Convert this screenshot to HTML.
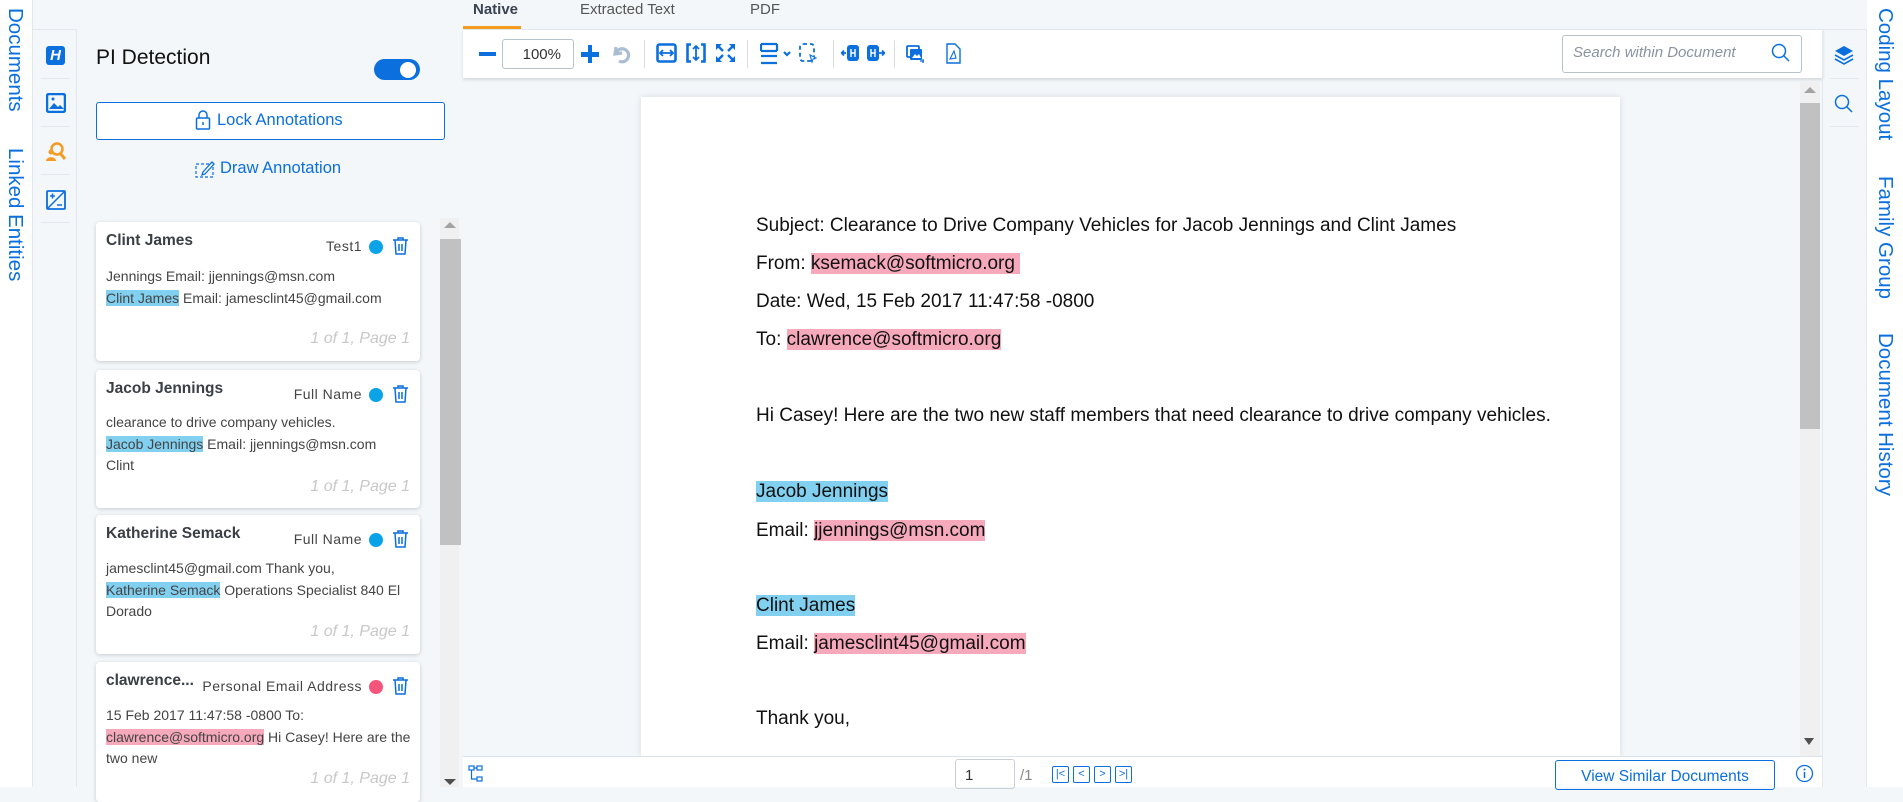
<!DOCTYPE html>
<html><head><meta charset="utf-8">
<style>
*{box-sizing:border-box;margin:0;padding:0}
body{width:1903px;height:787px;overflow:hidden;background:#f3f7fa;font-family:"Liberation Sans",sans-serif;position:relative;color:#333}
.a{position:absolute}
.vt{writing-mode:vertical-rl;color:#0b6fde;font-size:20.5px;position:absolute;white-space:nowrap}
.blue{color:#0b6fde}
.card{position:absolute;left:96px;width:324px;background:#fff;border-radius:4px;box-shadow:0 1px 4px rgba(0,0,0,.18)}
.card .t{position:absolute;left:10px;top:10px;font-weight:bold;font-size:15.5px;color:#3a3f45}
.card .tag{position:absolute;right:58px;top:16px;font-size:14px;color:#444;letter-spacing:.5px}
.card .dot{position:absolute;right:37px;top:18px;width:14px;height:14px;border-radius:50%;background:#0aa3e8}
.card .trash{position:absolute;right:11px;top:14px}
.card .b{position:absolute;left:10px;top:55px;width:308px;font-size:14px;line-height:21.5px;color:#444}
.card .pg{position:absolute;right:10px;font-size:16px;font-style:italic;color:#c8c8c8}
.hb{background:#82d0f0}
.hp{background:#f5a9bb}
.doc{position:absolute;left:756px;font-size:19px;color:#111;white-space:nowrap}
.sep{position:absolute;top:40px;width:1px;height:28px;background:#d8dde3}
</style></head><body>
<div class="a" style="left:0;top:0;width:33px;height:787px;background:#fff;border-right:1px solid #e2e8ee"></div>
<div class="vt" style="left:3px;top:8px">Documents</div>
<div class="vt" style="left:3px;top:148px">Linked Entities</div>
<div class="a" style="left:33px;top:29px;width:44px;height:758px;border-right:1px solid #e2e8ee;border-top:1px solid #e2e8ee"></div>
<div class="a" style="left:46px;top:46px;width:19px;height:19px;background:#0b6fde;border-radius:3px;color:#fff;font-weight:bold;font-style:italic;font-size:15px;text-align:center;line-height:19px">H</div>
<div class="a" style="left:41px;top:78px;width:29px;height:1px;background:#e2e8ee"></div>
<svg class="a" style="left:46px;top:93px" width="20" height="20"><rect x="1" y="1" width="18" height="18" rx="2" fill="none" stroke="#0b6fde" stroke-width="2.5"/><path d="M3 16l5-6 4 4 2-2 4 4z" fill="#0b6fde"/><circle cx="7" cy="6" r="1.5" fill="#0b6fde"/></svg>
<div class="a" style="left:41px;top:126px;width:29px;height:1px;background:#e2e8ee"></div>
<svg class="a" style="left:46px;top:142px" width="20" height="20"><circle cx="11" cy="7" r="5.5" fill="none" stroke="#f59a23" stroke-width="2.5"/><path d="M14 11l5 6" stroke="#f59a23" stroke-width="3"/><circle cx="5" cy="10" r="2.5" fill="#f59a23"/><path d="M0 19c0-5 10-5 10 0z" fill="#f59a23"/></svg>
<div class="a" style="left:41px;top:174px;width:29px;height:1px;background:#e2e8ee"></div>
<svg class="a" style="left:46px;top:190px" width="20" height="20"><rect x="1" y="1" width="18" height="18" rx="1" fill="none" stroke="#0b6fde" stroke-width="1.8"/><path d="M1 19L19 1M4 6h5M6.5 3.5v5M11 15h5" stroke="#0b6fde" stroke-width="1.5"/></svg>
<div class="a" style="left:41px;top:222px;width:29px;height:1px;background:#e2e8ee"></div>
<div class="a" style="left:96px;top:46px;font-size:21px;color:#111">PI Detection</div>
<div class="a" style="left:374px;top:59px;width:46px;height:21px;border-radius:11px;background:#0b6fde"></div>
<div class="a" style="left:400px;top:62px;width:16px;height:16px;border-radius:50%;background:#fff"></div>
<div class="a" style="left:96px;top:102px;width:349px;height:38px;border:1.5px solid #0b6fde;border-radius:3px;background:#fff"></div>
<svg class="a" style="left:195px;top:110px" width="16" height="20"><rect x="1.5" y="8" width="13" height="11" rx="1" fill="none" stroke="#0b6fde" stroke-width="1.5"/><path d="M4 8V5a4 4 0 0 1 8 0v3" fill="none" stroke="#0b6fde" stroke-width="1.5"/><path d="M8 12v3" stroke="#0b6fde" stroke-width="1.5"/></svg>
<div class="a blue" style="left:217px;top:111px;font-size:16.5px">Lock Annotations</div>
<svg class="a" style="left:195px;top:159px" width="20" height="20"><rect x="1" y="5" width="17" height="13" fill="none" stroke="#0b6fde" stroke-width="1.2" stroke-dasharray="3 2"/><path d="M8 13l9-10 2 2-9 10-3 1z" fill="#fff" stroke="#0b6fde" stroke-width="1.3"/></svg>
<div class="a blue" style="left:220px;top:159px;font-size:16.5px">Draw Annotation</div>
<div class="a" style="left:440px;top:218px;width:19px;height:569px;background:#f0f0f0"></div>
<div class="a" style="left:444px;top:222px;width:0;height:0;border-left:6px solid transparent;border-right:6px solid transparent;border-bottom:6px solid #a3a3a3"></div>
<div class="a" style="left:440px;top:239px;width:21px;height:306px;background:#c1c1c1"></div>
<div class="a" style="left:444px;top:779px;width:0;height:0;border-left:6px solid transparent;border-right:6px solid transparent;border-top:6px solid #505050"></div>
<div class="card" style="top:222px;height:139px">
<div class="t">Clint James</div><div class="tag">Test1</div><div class="dot"></div>
<svg class="trash" width="17" height="19" viewBox="0 0 17 19"><path d="M1 4h15M6 4V2h5v2M3 4l1 14h9l1-14M7 8v7M10 8v7" fill="none" stroke="#0b6fde" stroke-width="1.5"/></svg>
<div class="b" style="top:43px;line-height:22px">Jennings Email: jjennings@msn.com<br><span class="hb">Clint James</span> Email: jamesclint45@gmail.com</div>
<div class="pg" style="top:108px">1 of 1, Page 1</div></div>
<div class="card" style="top:370px;height:138px">
<div class="t">Jacob Jennings</div><div class="tag">Full Name</div><div class="dot"></div>
<svg class="trash" width="17" height="19" viewBox="0 0 17 19"><path d="M1 4h15M6 4V2h5v2M3 4l1 14h9l1-14M7 8v7M10 8v7" fill="none" stroke="#0b6fde" stroke-width="1.5"/></svg>
<div class="b" style="top:42px">clearance to drive company vehicles.<br><span class="hb">Jacob Jennings</span> Email: jjennings@msn.com<br>Clint</div>
<div class="pg" style="top:108px">1 of 1, Page 1</div></div>
<div class="card" style="top:515px;height:139px">
<div class="t">Katherine Semack</div><div class="tag">Full Name</div><div class="dot"></div>
<svg class="trash" width="17" height="19" viewBox="0 0 17 19"><path d="M1 4h15M6 4V2h5v2M3 4l1 14h9l1-14M7 8v7M10 8v7" fill="none" stroke="#0b6fde" stroke-width="1.5"/></svg>
<div class="b" style="top:43px">jamesclint45@gmail.com Thank you,<br><span class="hb">Katherine Semack</span> Operations Specialist 840 El Dorado</div>
<div class="pg" style="top:108px">1 of 1, Page 1</div></div>
<div class="card" style="top:662px;height:140px">
<div class="t">clawrence...</div><div class="tag">Personal Email Address</div><div class="dot" style="background:#f4557a"></div>
<svg class="trash" width="17" height="19" viewBox="0 0 17 19"><path d="M1 4h15M6 4V2h5v2M3 4l1 14h9l1-14M7 8v7M10 8v7" fill="none" stroke="#0b6fde" stroke-width="1.5"/></svg>
<div class="b" style="top:43px">15 Feb 2017 11:47:58 -0800 To:<br><span class="hp">clawrence@softmicro.org</span> Hi Casey! Here are the two new</div>
<div class="pg" style="top:108px">1 of 1, Page 1</div></div>
<div class="a" style="left:473px;top:1px;font-size:15px;font-weight:bold;color:#3a4350">Native</div>
<div class="a" style="left:463px;top:26px;width:58px;height:3px;background:#f39c1f"></div>
<div class="a" style="left:580px;top:1px;font-size:15px;color:#555">Extracted Text</div>
<div class="a" style="left:750px;top:1px;font-size:15px;color:#555">PDF</div>
<div class="a" style="left:463px;top:29px;width:1360px;height:49px;background:#fff;border-top:1px solid #e2e8ee;box-shadow:0 2px 3px rgba(0,0,0,.12)"></div>
<div class="a" style="left:479px;top:52px;width:17px;height:4px;background:#0b6fde"></div>
<div class="a" style="left:502px;top:39px;width:72px;height:30px;border:1px solid #b8c2cc;border-radius:3px;font-size:15px;color:#333;text-align:right;padding:6px 12px 0 0">100%</div>
<div class="a" style="left:581px;top:52px;width:18px;height:4.5px;background:#0b6fde"></div>
<div class="a" style="left:587.8px;top:45px;width:4.5px;height:18px;background:#0b6fde"></div>
<svg class="a" style="left:612px;top:44px" width="20" height="20"><path d="M4 3l-1 7 7-1M4 9a6.5 6.5 0 1 1 3 8" fill="none" stroke="#a9bdd3" stroke-width="3.2"/></svg>
<div class="sep" style="left:644px"></div>
<svg class="a" style="left:656px;top:43px" width="21" height="20"><rect x="1.5" y="1.5" width="18" height="17" rx="2" fill="none" stroke="#0b6fde" stroke-width="2.6"/><path d="M4 10h13M7 7l-3 3 3 3M14 7l3 3-3 3" fill="none" stroke="#0b6fde" stroke-width="1.8"/></svg>
<svg class="a" style="left:686px;top:43px" width="20" height="20"><path d="M5 1.5H1.5v17H5M15 1.5h3.5v17H15" fill="none" stroke="#0b6fde" stroke-width="2.6"/><path d="M10 3v14M7 6l3-3 3 3M7 14l3 3 3-3" fill="none" stroke="#0b6fde" stroke-width="1.8"/></svg>
<svg class="a" style="left:715px;top:43px" width="21" height="20"><path d="M2 2l6 6M19 2l-6 6M2 18l6-6M19 18l-6-6" stroke="#0b6fde" stroke-width="2.4"/><path d="M1 1h6L1 7zM20 1h-6l6 6zM1 19h6l-6-6zM20 19h-6l6-6z" fill="#0b6fde"/></svg>
<div class="sep" style="left:747px"></div>
<svg class="a" style="left:760px;top:42px" width="36" height="23"><path d="M1 2h16M1 9h16M1 14h16M1 21h16M1 2v7M17 2v7" fill="none" stroke="#0b6fde" stroke-width="2.2"/><path d="M24 10l3 3 3-3" fill="none" stroke="#0b6fde" stroke-width="2.2"/></svg>
<svg class="a" style="left:799px;top:43px" width="18" height="22"><rect x="1" y="1" width="14" height="17" rx="3" fill="none" stroke="#0b6fde" stroke-width="1.8" stroke-dasharray="4 3"/><path d="M11 12l6 3-3 1-1 3z" fill="#fff" stroke="#0b6fde" stroke-width="1.1"/></svg>
<div class="sep" style="left:833px"></div>
<svg class="a" style="left:841px;top:44px" width="19" height="18"><path d="M0 9h5M3 6.5L0.5 9 3 11.5" stroke="#0b6fde" stroke-width="1.8" fill="none"/><rect x="6" y="1" width="12" height="16" rx="3" fill="#0b6fde"/><path d="M10 5v8M14 5v8M10 9h4" stroke="#fff" stroke-width="1.4"/></svg>
<svg class="a" style="left:866px;top:44px" width="19" height="18"><rect x="1" y="1" width="12" height="16" rx="3" fill="#0b6fde"/><path d="M5 5v8M9 5v8M5 9h4" stroke="#fff" stroke-width="1.4"/><path d="M13 9h5M16 6.5l2.5 2.5-2.5 2.5" stroke="#0b6fde" stroke-width="1.8" fill="none"/></svg>
<div class="sep" style="left:894px"></div>
<svg class="a" style="left:906px;top:45px" width="19" height="18"><rect x="1" y="1" width="12" height="11" rx="1" fill="none" stroke="#0b6fde" stroke-width="1.8"/><rect x="4" y="4" width="12" height="11" rx="1" fill="#0b6fde"/><path d="M6 13l3-4 2 2 2-2 2 4z" fill="#fff"/><path d="M14 16h4M17 14v4" stroke="#0b6fde" stroke-width="1.2"/></svg>
<svg class="a" style="left:946px;top:43px" width="15" height="21"><path d="M1 1h8l5 5v14H1z" fill="none" stroke="#0b6fde" stroke-width="1.4"/><path d="M4 16l4-8 2 7z" fill="none" stroke="#0b6fde" stroke-width="1.1"/></svg>
<div class="a" style="left:1562px;top:35px;width:240px;height:38px;border:1px solid #b8c2cc;border-radius:3px;background:#fff"></div>
<div class="a" style="left:1573px;top:44px;font-size:15px;font-style:italic;color:#8a93a0">Search within Document</div>
<svg class="a" style="left:1771px;top:43px" width="20" height="20"><circle cx="8" cy="8" r="6.5" fill="none" stroke="#0b6fde" stroke-width="1.5"/><path d="M13 13l5 5" stroke="#0b6fde" stroke-width="1.5"/></svg>
<div class="a" style="left:641px;top:97px;width:979px;height:659px;background:#fff;box-shadow:0 0 6px rgba(0,0,0,.12)"></div>
<div class="doc" style="top:215px">Subject: Clearance to Drive Company Vehicles for Jacob Jennings and Clint James</div>
<div class="doc" style="top:253px">From: <span class="hp">ksemack@softmicro.org&nbsp;</span></div>
<div class="doc" style="top:291px">Date: Wed, 15 Feb 2017 11:47:58 -0800</div>
<div class="doc" style="top:329px">To: <span class="hp">clawrence@softmicro.org</span></div>
<div class="doc" style="top:405px">Hi Casey! Here are the two new staff members that need clearance to drive company vehicles.</div>
<div class="doc" style="top:481px"><span class="hb">Jacob Jennings</span></div>
<div class="doc" style="top:520px">Email: <span class="hp">jjennings@msn.com</span></div>
<div class="doc" style="top:595px"><span class="hb">Clint James</span></div>
<div class="doc" style="top:633px">Email: <span class="hp">jamesclint45@gmail.com</span></div>
<div class="doc" style="top:708px">Thank you,</div>
<div class="a" style="left:1800px;top:82px;width:20px;height:674px;background:#f0f0f0"></div>
<div class="a" style="left:1804px;top:87px;width:0;height:0;border-left:6px solid transparent;border-right:6px solid transparent;border-bottom:6px solid #a3a3a3"></div>
<div class="a" style="left:1800px;top:103px;width:20px;height:326px;background:#c1c1c1"></div>
<div class="a" style="left:1804px;top:738px;width:0;height:0;border-left:5px solid transparent;border-right:5px solid transparent;border-top:7px solid #505050"></div>
<div class="a" style="left:1822px;top:29px;width:45px;height:758px;border-left:1px solid #e2e8ee;border-right:1px solid #e2e8ee;border-top:1px solid #e2e8ee"></div>
<svg class="a" style="left:1834px;top:45px" width="20" height="20"><path d="M10 1l9 5-9 5-9-5z" fill="#0b6fde"/><path d="M1 10l9 5 9-5M1 14l9 5 9-5" fill="none" stroke="#0b6fde" stroke-width="1.6"/></svg>
<div class="a" style="left:1830px;top:78px;width:29px;height:1px;background:#e2e8ee"></div>
<svg class="a" style="left:1834px;top:94px" width="20" height="20"><circle cx="8" cy="8" r="6.5" fill="none" stroke="#0b6fde" stroke-width="1.5"/><path d="M13 13l5 5" stroke="#0b6fde" stroke-width="1.5"/></svg>
<div class="a" style="left:1830px;top:126px;width:29px;height:1px;background:#e2e8ee"></div>
<div class="a" style="left:1867px;top:0;width:36px;height:787px;background:#fff"></div>
<div class="vt" style="left:1873px;top:8px">Coding Layout</div>
<div class="vt" style="left:1873px;top:176px">Family Group</div>
<div class="vt" style="left:1873px;top:333px">Document History</div>
<div class="a" style="left:463px;top:756px;width:1359px;height:31px;background:#fff;border-top:1px solid #dbe3ea"></div>
<svg class="a" style="left:468px;top:765px" width="16" height="18"><rect x="1" y="1" width="5" height="4" fill="none" stroke="#0b6fde" stroke-width="1.2"/><rect x="9" y="1" width="5" height="4" fill="none" stroke="#0b6fde" stroke-width="1.2"/><rect x="9" y="12" width="5" height="4" fill="none" stroke="#0b6fde" stroke-width="1.2"/><path d="M3.5 5v9h5.5M6 3h3" stroke="#0b6fde" stroke-width="1.2" fill="none"/></svg>
<div class="a" style="left:955px;top:759px;width:60px;height:30px;border:1px solid #c8d0d8;border-radius:3px;font-size:15px;padding:7px 0 0 9px;color:#333">1</div>
<div class="a" style="left:1020px;top:767px;font-size:15px;color:#888">/1</div>
<div class="a" style="left:1052px;top:766px;width:17px;height:17px;border:1.5px solid #0b6fde;border-radius:2px;font-size:11px;color:#0b6fde;text-align:center;line-height:14px">|&lt;</div>
<div class="a" style="left:1073px;top:766px;width:17px;height:17px;border:1.5px solid #0b6fde;border-radius:2px;font-size:11px;color:#0b6fde;text-align:center;line-height:14px">&lt;</div>
<div class="a" style="left:1094px;top:766px;width:17px;height:17px;border:1.5px solid #0b6fde;border-radius:2px;font-size:11px;color:#0b6fde;text-align:center;line-height:14px">&gt;</div>
<div class="a" style="left:1115px;top:766px;width:17px;height:17px;border:1.5px solid #0b6fde;border-radius:2px;font-size:11px;color:#0b6fde;text-align:center;line-height:14px">&gt;|</div>
<div class="a" style="left:1555px;top:760px;width:220px;height:30px;border:1px solid #0b6fde;border-radius:3px;font-size:15.5px;color:#0b6fde;text-align:center;padding-top:7px">View Similar Documents</div>
<svg class="a" style="left:1795px;top:764px" width="19" height="19"><circle cx="9.5" cy="9.5" r="8" fill="none" stroke="#0b6fde" stroke-width="1.3"/><path d="M9.5 8v6" stroke="#0b6fde" stroke-width="1.5"/><circle cx="9.5" cy="5.5" r="1" fill="#0b6fde"/></svg>
</body></html>
